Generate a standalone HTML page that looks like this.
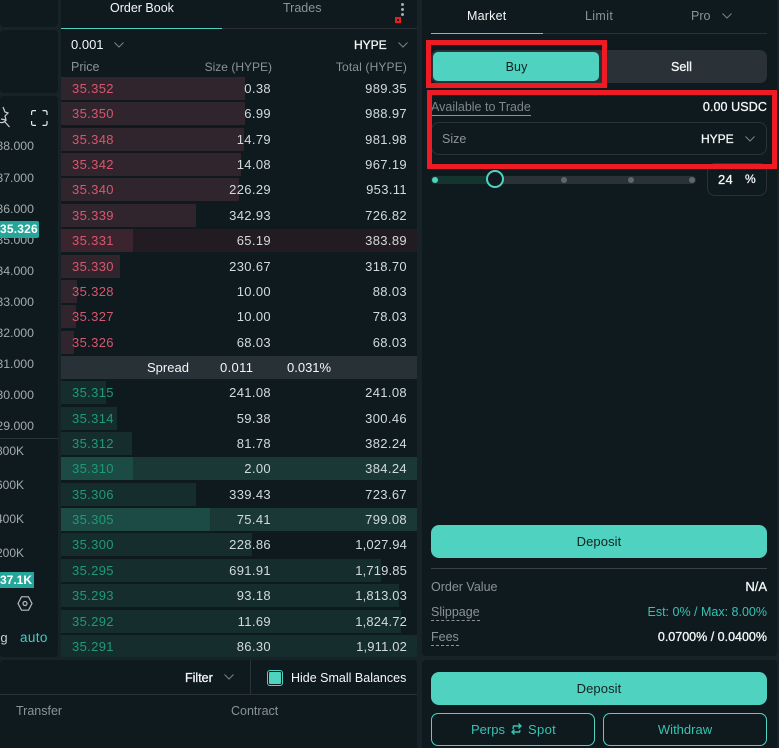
<!DOCTYPE html>
<html><head><meta charset="utf-8">
<style>
html,body{margin:0;padding:0;background:#172329;overflow:hidden;height:748px;}
body{width:779px;height:748px;position:relative;overflow:hidden;font-family:"Liberation Sans",sans-serif;font-size:13px;letter-spacing:.35px;color:#d2dadb;}
div,span{position:absolute;white-space:nowrap;box-sizing:border-box;}
.p{background:#0f1a1f;border-radius:4px;}
.row{left:61px;width:356px;height:23px;line-height:23px;}
.bar{left:0;top:0;height:23px;}
.a .bar{background:#30252d;}
.b .bar{background:#152d2d;}
.a.full{background:#221b22;}
.a.full .bar{background:#3a252e;}
.b.full{background:#193836;}
.b.full .bar{background:#1c4a44;}
.pr{left:11px;}
.a .pr{color:#d9566f;}
.b .pr{color:#1f9a78;}
.sz{right:146px;}
.tt{right:10px;}
.t2{letter-spacing:.15px;}
.y{right:745px;color:#a4abad;font-size:12.300px;letter-spacing:0;margin-top:1px;}
.v{right:755px;color:#a4abad;font-size:12px;letter-spacing:0;}
.mut{color:#8a9396;}
.w{color:#f4f7f7;}
.m{-webkit-text-stroke:.3px currentColor;letter-spacing:0;}
.lab{font-size:12.500px;letter-spacing:0;margin-top:1px;}
.d{margin-top:1px;}
.teal{background:#50d2c1;color:#12231f;text-align:center;border-radius:7px;letter-spacing:.1px;}
.out{border:1px solid #50d2c1;border-radius:7px;color:#35c3b0;text-align:center;letter-spacing:0;}
.red{border:5px solid #ed1c24;}
svg{position:absolute;overflow:visible;}
</style></head><body>

<div class="p" style="left:0;top:-4px;width:58px;height:31px"></div>
<div class="p" style="left:0;top:30px;width:58px;height:63px"></div>
<div class="p" style="left:0;top:96px;width:58px;height:561px"></div>
<div class="p" style="left:61px;top:-4px;width:356px;height:661px"></div>
<div class="p" style="left:0;top:660px;width:417px;height:88px;border-radius:4px 4px 0 0"></div>
<div class="p" style="left:422px;top:-4px;width:355px;height:660px"></div>
<div class="p" style="left:422px;top:660px;width:355px;height:88px;border-radius:4px 4px 0 0"></div>

<!-- chart -->
<svg style="left:0;top:100px" width="12" height="30" viewBox="0 0 12 30" fill="none" stroke="#c9d0d1" stroke-width="1.200"><path d="M3 7L5 12L8 13L5 16L6 20L1 19M-1 22Q3 24 6 20M5 22L9.500 27"/></svg>
<svg style="left:31px;top:110px" width="17" height="16" viewBox="0 0 17 16" fill="none" stroke="#e4e9e9" stroke-width="1.200"><path d="M.6 5V2.500Q.6.6 2.500.6H5M11.500.6H14Q16 .6 16 2.500V5M16 11V13.500Q16 15.400 14 15.400H11.500M5 15.400H2.500Q.6 15.400 .6 13.500V11"/></svg>
<div class="y" style="top:138px">38.000</div>
<div class="y" style="top:170px">37.000</div>
<div class="y" style="top:201px">36.000</div>
<div class="y" style="top:232px">35.000</div>
<div style="left:0;top:221px;width:39px;height:17px;background:#26a69a;color:#fff;font-weight:bold;font-size:12px;line-height:17px;text-align:right;padding-right:5px;letter-spacing:.2px;border-radius:0 2px 2px 0">35.326</div>
<div class="y" style="top:263px">34.000</div>
<div class="y" style="top:294px">33.000</div>
<div class="y" style="top:325px">32.000</div>
<div class="y" style="top:356px">31.000</div>
<div class="y" style="top:387px">30.000</div>
<div class="y" style="top:418px">29.000</div>
<div style="left:0;top:438px;width:58px;height:1px;background:#2b3338"></div>
<div class="v" style="top:444px">800K</div>
<div class="v" style="top:478px">600K</div>
<div class="v" style="top:512px">400K</div>
<div class="v" style="top:546px">200K</div>
<div style="left:0;top:572px;width:34px;height:16px;background:#26a69a;color:#fff;font-weight:bold;font-size:12px;line-height:16px;text-align:right;padding-right:5px;letter-spacing:0">37.1K</div>
<svg style="left:17px;top:596px" width="16" height="15" viewBox="0 0 16 15" fill="none" stroke="#b5bcbd" stroke-width="1.200"><path d="M4.500 .8H11.500L15 7.500L11.500 14.200H4.500L1 7.500Z"/><circle cx="8" cy="7.500" r="2"/></svg>
<div style="right:771px;top:630px;color:#c8cfd0">g</div>
<div style="left:20px;top:630px;color:#3ccfc0;font-size:13.500px">auto</div>

<!-- order book header -->
<div class="w lab" style="left:110px;top:0">Order Book</div>
<div class="mut lab" style="left:283px;top:0">Trades</div>
<div style="left:61px;top:28px;width:356px;height:1px;background:#2b2f33"></div>
<div style="left:61px;top:28px;width:161px;height:1px;background:#50d2c1"></div>
<div style="left:401px;top:3px;width:3px;height:3px;background:#a5acae;border-radius:2px"></div>
<div style="left:401px;top:8px;width:3px;height:3px;background:#a5acae;border-radius:2px"></div>
<div style="left:401px;top:13px;width:3px;height:3px;background:#a5acae;border-radius:2px"></div>
<div style="left:395px;top:17px;width:6px;height:6px;border:2px solid #ed1c24"></div>

<div class="w" style="left:71px;top:37px;letter-spacing:0">0.001</div>
<svg style="left:114px;top:42px" width="10" height="6" fill="none" stroke="#79848a" stroke-width="1"><path d="M.5.5L5 5L9.500.5"/></svg>
<div class="w m" style="left:354px;top:38px;font-size:12px">HYPE</div>
<svg style="left:398px;top:42px" width="10" height="6" fill="none" stroke="#79848a" stroke-width="1"><path d="M.5.5L5 5L9.500.5"/></svg>
<div class="mut lab" style="left:71px;top:59px">Price</div>
<div class="mut" style="right:507px;top:60px;font-size:12px;letter-spacing:0">Size (HYPE)</div>
<div class="mut" style="right:372px;top:60px;font-size:12px;letter-spacing:.15px">Total (HYPE)</div>

<!-- asks -->
<div class="row a" style="top:77px"><div class="bar" style="width:184px"></div><span class="pr">35.352</span><span class="sz">0.38</span><span class="tt">989.35</span></div>
<div class="row a" style="top:102px"><div class="bar" style="width:184px"></div><span class="pr">35.350</span><span class="sz">6.99</span><span class="tt">988.97</span></div>
<div class="row a" style="top:128px"><div class="bar" style="width:183px"></div><span class="pr">35.348</span><span class="sz">14.79</span><span class="tt">981.98</span></div>
<div class="row a" style="top:153px"><div class="bar" style="width:180px"></div><span class="pr">35.342</span><span class="sz">14.08</span><span class="tt">967.19</span></div>
<div class="row a" style="top:178px"><div class="bar" style="width:178px"></div><span class="pr">35.340</span><span class="sz">226.29</span><span class="tt">953.11</span></div>
<div class="row a" style="top:204px"><div class="bar" style="width:135px"></div><span class="pr">35.339</span><span class="sz">342.93</span><span class="tt">726.82</span></div>
<div class="row a full" style="top:229px"><div class="bar" style="width:72px"></div><span class="pr">35.331</span><span class="sz">65.19</span><span class="tt">383.89</span></div>
<div class="row a" style="top:255px"><div class="bar" style="width:59px"></div><span class="pr">35.330</span><span class="sz">230.67</span><span class="tt">318.70</span></div>
<div class="row a" style="top:280px"><div class="bar" style="width:16px"></div><span class="pr">35.328</span><span class="sz">10.00</span><span class="tt">88.03</span></div>
<div class="row a" style="top:305px"><div class="bar" style="width:15px"></div><span class="pr">35.327</span><span class="sz">10.00</span><span class="tt">78.03</span></div>
<div class="row a" style="top:331px"><div class="bar" style="width:13px"></div><span class="pr">35.326</span><span class="sz">68.03</span><span class="tt">68.03</span></div>

<!-- spread -->
<div class="row" style="top:356px;background:#293138;color:#f4f7f7"><span style="left:86px;letter-spacing:0">Spread</span><span style="left:159px">0.011</span><span style="left:226px;letter-spacing:0">0.031%</span></div>

<!-- bids -->
<div class="row b" style="top:381px"><div class="bar" style="width:45px"></div><span class="pr">35.315</span><span class="sz">241.08</span><span class="tt">241.08</span></div>
<div class="row b" style="top:407px"><div class="bar" style="width:56px"></div><span class="pr">35.314</span><span class="sz">59.38</span><span class="tt">300.46</span></div>
<div class="row b" style="top:432px"><div class="bar" style="width:71px"></div><span class="pr">35.312</span><span class="sz">81.78</span><span class="tt">382.24</span></div>
<div class="row b full" style="top:457px"><div class="bar" style="width:72px"></div><span class="pr">35.310</span><span class="sz">2.00</span><span class="tt">384.24</span></div>
<div class="row b" style="top:483px"><div class="bar" style="width:135px"></div><span class="pr">35.306</span><span class="sz">339.43</span><span class="tt">723.67</span></div>
<div class="row b full" style="top:508px"><div class="bar" style="width:149px"></div><span class="pr">35.305</span><span class="sz">75.41</span><span class="tt">799.08</span></div>
<div class="row b" style="top:533px"><div class="bar" style="width:191px"></div><span class="pr">35.300</span><span class="sz">228.86</span><span class="tt t2">1,027.94</span></div>
<div class="row b" style="top:559px"><div class="bar" style="width:320px"></div><span class="pr">35.295</span><span class="sz">691.91</span><span class="tt t2">1,719.85</span></div>
<div class="row b" style="top:584px"><div class="bar" style="width:338px"></div><span class="pr">35.293</span><span class="sz">93.18</span><span class="tt t2">1,813.03</span></div>
<div class="row b" style="top:610px"><div class="bar" style="width:340px"></div><span class="pr">35.292</span><span class="sz">11.69</span><span class="tt t2">1,824.72</span></div>
<div class="row b" style="top:635px;height:22px"><div class="bar" style="width:356px;height:22px"></div><span class="pr">35.291</span><span class="sz">86.30</span><span class="tt t2">1,911.02</span></div>

<!-- bottom left -->
<div class="w m d" style="left:185px;top:670px;font-size:12.500px">Filter</div>
<svg style="left:224px;top:674px" width="10" height="6" fill="none" stroke="#79848a" stroke-width="1"><path d="M.5.5L5 5L9.500.5"/></svg>
<div style="left:250px;top:660px;width:1px;height:34px;background:#2b3237"></div>
<div style="left:267px;top:670px;width:16px;height:16px;border:1px solid #50d2c1;border-radius:3px;background:#0f1a1f"></div>
<div style="left:269px;top:672px;width:12px;height:12px;background:#50d2c1;border-radius:1px"></div>
<div class="w lab" style="left:291px;top:670px">Hide Small Balances</div>
<div style="left:0;top:694px;width:417px;height:1px;background:#2b3237"></div>
<div class="mut lab" style="left:16px;top:703px">Transfer</div>
<div class="mut lab" style="left:231px;top:703px">Contract</div>

<!-- right tabs -->
<div class="w d" style="left:467px;top:8px;font-size:12.500px;letter-spacing:.2px">Market</div>
<div class="mut d" style="left:585px;top:8px;font-size:12.500px">Limit</div>
<div class="mut lab" style="left:691px;top:8px">Pro</div>
<svg style="left:722px;top:13px" width="10" height="6" fill="none" stroke="#79848a" stroke-width="1"><path d="M.5.5L5 5L9.500.5"/></svg>
<div style="left:431px;top:33px;width:336px;height:1px;background:#2b3237"></div>
<div style="left:431px;top:33px;width:112px;height:1px;background:#50d2c1"></div>

<!-- buy sell -->
<div style="left:431px;top:50px;width:336px;height:33px;background:#2a3238;border-radius:7px"></div>
<div class="teal" style="left:433px;top:52px;width:166px;height:29px;line-height:31px;border-radius:5px;font-size:12.500px;padding-left:1px">Buy</div>
<div class="w m d" style="left:671px;top:59px;font-size:12.500px">Sell</div>
<div class="red" style="left:426px;top:40px;width:181px;height:48px"></div>

<!-- available -->
<div class="lab" style="left:431px;top:99px;border-bottom:1px solid #8a9396;line-height:15px;color:#7d868a">Available to Trade</div>
<div class="w m d" style="right:12px;top:99px;font-size:12.500px;letter-spacing:.1px">0.00 USDC</div>
<div style="left:431px;top:122px;width:336px;height:33px;border:1px solid #2b3237;border-radius:8px"></div>
<div class="mut lab" style="left:442px;top:131px">Size</div>
<div class="w m" style="left:701px;top:132px;font-size:12px">HYPE</div>
<svg style="left:745px;top:136px" width="10" height="6" fill="none" stroke="#79848a" stroke-width="1"><path d="M.5.5L5 5L9.500.5"/></svg>

<!-- slider -->
<div style="left:431px;top:176px;width:265px;height:8px;background:#2a3238;border-radius:4px"></div>
<div style="left:431px;top:176px;width:64px;height:8px;background:#14352f;border-radius:4px 0 0 4px"></div>
<div style="left:432px;top:177px;width:6px;height:6px;background:#50d2c1;border-radius:50%"></div>
<div style="left:561px;top:177px;width:6px;height:6px;background:#5d676c;border-radius:50%"></div>
<div style="left:628px;top:177px;width:6px;height:6px;background:#5d676c;border-radius:50%"></div>
<div style="left:689px;top:177px;width:6px;height:6px;background:#5d676c;border-radius:50%"></div>
<div style="left:486px;top:170px;width:18px;height:18px;background:#0f1a1f;border:2px solid #50d2c1;border-radius:50%"></div>
<div style="left:707px;top:163px;width:60px;height:33px;border:1px solid #2b3237;border-radius:8px"></div>
<div class="red" style="left:427px;top:90px;width:350px;height:79px;background:transparent"></div>
<div class="w m" style="left:718px;top:172px;font-size:13px;letter-spacing:.3px">24</div>
<div class="w m" style="left:745px;top:172px;font-size:12px">%</div>

<!-- order panel bottom -->
<div class="teal" style="left:431px;top:525px;width:336px;height:33px;line-height:33px;border-radius:8px">Deposit</div>
<div style="left:431px;top:568px;width:336px;height:1px;background:#3a4044"></div>
<div class="mut lab" style="left:431px;top:579px">Order Value</div>
<div class="w m" style="right:12px;top:579px">N/A</div>
<div class="mut lab" style="left:431px;top:604px;border-bottom:1px dashed #8a9396;line-height:15px">Slippage</div>
<div class="lab" style="right:12px;top:604px;color:#35c3b0">Est: 0% / Max: 8.00%</div>
<div class="mut lab" style="left:431px;top:629px;border-bottom:1px dashed #8a9396;line-height:15px">Fees</div>
<div class="w m d" style="right:12px;top:629px;font-size:12.500px">0.0700% / 0.0400%</div>

<div class="teal" style="left:431px;top:672px;width:336px;height:33px;line-height:33px;border-radius:8px">Deposit</div>
<div class="out" style="left:431px;top:713px;width:164px;height:33px"></div>
<div style="left:471px;top:722px;color:#35c3b0;letter-spacing:0">Perps</div>
<svg style="left:510px;top:723px" width="14" height="13" viewBox="0 0 14 13" fill="none" stroke="#35c3b0" stroke-width="1.400"><path d="M3 6L3.500 3H11M8.500 .5L11 3L8.500 5.500M10 7L9.500 9H2M4.500 6.500L2 9L4.500 11.500"/></svg>
<div style="left:528px;top:722px;color:#35c3b0">Spot</div>
<div class="out" style="left:603px;top:713px;width:164px;height:33px;line-height:31px">Withdraw</div>

</body></html>
